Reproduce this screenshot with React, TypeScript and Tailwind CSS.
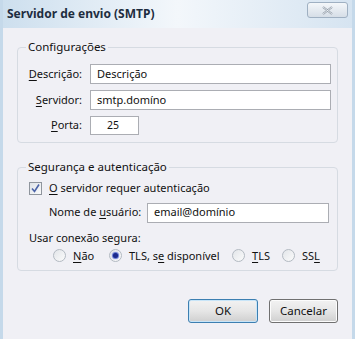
import React from "react";

const U = ({ c }: { c: string }) => <span className="underline underline-offset-2">{c}</span>;

function Radio({ checked }: { checked?: boolean }) {
  return (
    <span className="inline-flex h-[13px] w-[13px] shrink-0 items-center justify-center rounded-full border border-[#b3bac2] bg-gradient-to-br from-[#e2e5e9] to-[#fbfbfb]">
      {checked && <span className="h-[5px] w-[5px] rounded-full bg-[#1b2a8c] shadow-[0_0_1px_1px_#5a6fd0]" />}
    </span>
  );
}

export default function App() {
  return (
    <div className="relative h-[339px] w-[358px] overflow-hidden whitespace-nowrap bg-white" style={{ fontFamily: '"Noto Sans", "Open Sans", sans-serif' }}>
      <div className="flex h-[339px] w-[355px] flex-col border-l-[3px] border-r-[3px] border-[#c5d9ea] bg-gradient-to-r from-[#cddfee] via-[#f3f7fb] to-[#d6e4f1]">
        {/* Title bar */}
        <div className="relative flex h-[28px] shrink-0 items-center pl-[4px]">
          <span className="text-[12px] font-bold text-[#1e2d3f]">Servidor de envio (SMTP)</span>
          <div className="absolute right-[4px] top-[2px] flex h-[16px] w-[41px] items-center justify-center rounded-[3px] border border-[#9fb0c2] bg-gradient-to-b from-[#f4f7fa] to-[#d6dee7]">
            <svg width="11" height="9" viewBox="0 0 11 9">
              <path d="M1 1 L10 8 M10 1 L1 8" stroke="#8f9aa6" strokeWidth="2" fill="none" />
              <path d="M1 1 L10 8 M10 1 L1 8" stroke="#f3f5f7" strokeWidth="0.8" fill="none" />
            </svg>
          </div>
        </div>
        {/* Body */}
        <div className="flex flex-1 flex-col bg-[#f0f0f5] px-[14px] pt-[19px] text-[11px] text-[#111]">
          {/* Group 1 */}
          <div className="relative h-[96px] rounded-[4px] border border-[#d6dbe2]">
            <span className="absolute left-[8px] top-[-10px] bg-[#f0f0f5] px-[2px] text-[11.5px] leading-[18px]">Configurações</span>
            <div className="flex flex-col gap-[6px] pt-[16px]">
              <div className="flex items-center">
                <span className="w-[64px] text-right"><U c="D" />escrição:</span>
                <div className="ml-[8px] flex h-[20px] w-[241px] items-center border border-[#abadb3] bg-white pl-[6px]">Descrição</div>
              </div>
              <div className="flex items-center">
                <span className="w-[64px] text-right"><U c="S" />ervidor:</span>
                <div className="ml-[8px] flex h-[20px] w-[241px] items-center border border-[#abadb3] bg-white pl-[6px]">smtp.domíno</div>
              </div>
              <div className="flex items-center">
                <span className="w-[64px] text-right"><U c="P" />orta:</span>
                <div className="ml-[8px] flex h-[19px] w-[49px] items-center border border-[#abadb3] bg-white pl-[16px] text-[10.5px]">25</div>
              </div>
            </div>
          </div>
          {/* Group 2 */}
          <div className="relative mt-[24px] h-[104px] rounded-[4px] border border-[#d6dbe2]">
            <span className="absolute left-[8px] top-[-10px] bg-[#f0f0f5] px-[2px] text-[11.5px] leading-[18px]">Segurança e autenticação</span>
            <div className="pl-[11px] pt-[12px]">
              <div className="flex items-center">
                <span className="relative flex h-[13px] w-[13px] items-center justify-center border border-[#8f959d] bg-gradient-to-br from-[#dfe3e8] to-[#f9fafb]">
                  <svg width="11" height="11" viewBox="0 0 11 11">
                    <path d="M2 5.5 L4.5 8.5 L9 1.5" stroke="#4b63a8" strokeWidth="1.6" fill="none" />
                  </svg>
                </span>
                <span className="ml-[7px]"><U c="O" /> servidor requer autenticação</span>
              </div>
              <div className="mt-[6px] flex items-center pl-[20px]">
                <span className="w-[98px]">Nome de <U c="u" />suário:</span>
                <div className="flex h-[20px] w-[182px] items-center border border-[#abadb3] bg-white pl-[6px]">email@domínio</div>
              </div>
              <div className="mt-[7px] leading-[16px]">Usar conexão segura:</div>
              <div className="mt-[2px] flex items-center pl-[24px]">
                <Radio />
                <span className="ml-[7px] w-[36px]"><U c="N" />ão</span>
                <Radio checked />
                <span className="ml-[7px] w-[103px]">TLS, s<U c="e" /> disponível</span>
                <Radio />
                <span className="ml-[7px] w-[30px]"><U c="T" />LS</span>
                <Radio />
                <span className="ml-[7px]">SS<U c="L" /></span>
              </div>
            </div>
          </div>
          {/* Buttons */}
          <div className="mt-[28px] flex justify-end gap-[11px]">
            <button className="h-[24px] w-[70px] rounded-[3px] border border-[#3c7fb1] bg-gradient-to-b from-[#f2f2f2] via-[#e6e6e6] to-[#cfcfcf] text-[11.5px] shadow-[inset_0_0_0_1px_#c8e5f8]">OK</button>
            <button className="h-[24px] w-[69px] rounded-[3px] border border-[#707070] bg-gradient-to-b from-[#f2f2f2] via-[#e6e6e6] to-[#cfcfcf] text-[11.5px] shadow-[inset_0_0_0_1px_#fcfcfc]">Cancelar</button>
          </div>
        </div>
      </div>
    </div>
  );
}
